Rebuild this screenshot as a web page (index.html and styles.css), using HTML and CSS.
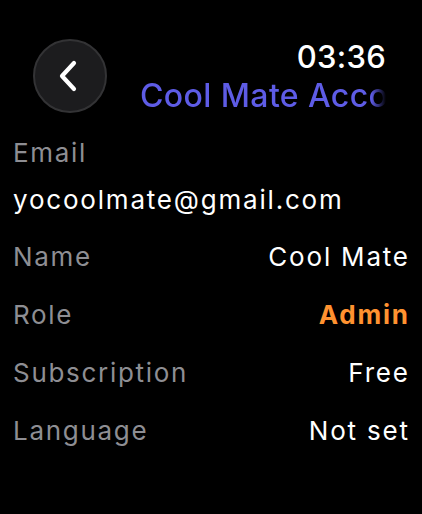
FILE: index.html
```html
<!DOCTYPE html>
<html lang="en">

<head>
    <meta charset="UTF-8" />
    <meta name="viewport" content="width=device-width, initial-scale=1.0" />
    <title>Account</title>
    <link rel="stylesheet" href="styles.css">
</head>

<body>
    <header class="top-bar">
        <button class="btn-back" aria-label="Back">
            <svg width="22" height="32" viewBox="0 0 22 32">
                <path d="M17 3 L5 16 L17 29" fill="none" stroke="#fff" stroke-width="4.2" stroke-linecap="round" stroke-linejoin="round"/>
            </svg>
        </button>
        <div class="top-right">
            <div class="time">03:36</div>
            <div class="title">Cool Mate Account</div>
        </div>
    </header>

    <main class="details">
        <div class="email-block">
            <div class="label">Email</div>
            <div class="value">yocoolmate@gmail.com</div>
        </div>
        <div class="row">
            <span class="label">Name</span>
            <span class="value">Cool Mate</span>
        </div>
        <div class="row">
            <span class="label">Role</span>
            <span class="value admin">Admin</span>
        </div>
        <div class="row">
            <span class="label">Subscription</span>
            <span class="value">Free</span>
        </div>
        <div class="row">
            <span class="label">Language</span>
            <span class="value">Not set</span>
        </div>
    </main>
</body>

</html>
```

FILE: styles.css
```css
* {
    margin: 0;
    padding: 0;
    box-sizing: border-box;
    font-family: Inter, "Noto Sans", sans-serif;
}

body {
    background: #000;
    color: #fff;
    width: 422px;
    height: 514px;
    overflow: hidden;
}

.top-bar {
    display: flex;
    align-items: flex-start;
    padding: 38px 36px 0 33px;
    gap: 33px;
}

.btn-back {
    width: 74px;
    height: 74px;
    margin-top: 1px;
    border-radius: 50%;
    background: #1c1c1e;
    border: 2px solid #333335;
    display: flex;
    align-items: center;
    justify-content: center;
    flex-shrink: 0;
}

.btn-back svg {
    margin-left: -4px;
}

.top-right {
    flex: 1;
    min-width: 0;
    text-align: right;
}

.time {
    font-size: 31px;
    line-height: 38px;
    font-weight: 500;
    letter-spacing: 0.3px;
}

.title {
    font-size: 32px;
    line-height: 40px;
    font-weight: 500;
    letter-spacing: 0.4px;
    color: #5e5ce6;
    white-space: nowrap;
    overflow: hidden;
    text-align: left;
    -webkit-mask-image: linear-gradient(to right, #000 94%, transparent 100%);
    mask-image: linear-gradient(to right, #000 94%, transparent 100%);
}

.details {
    padding: 13px 14px 0 13px;
}

.label {
    color: #8e8e93;
    font-size: 26px;
    letter-spacing: 1.7px;
}

.value {
    font-size: 26px;
    letter-spacing: 1.8px;
}

.row .value {
    margin-right: -1.8px;
}

.email-block div {
    line-height: 47px;
}

.email-block {
    margin-bottom: 5px;
}

.row {
    display: flex;
    justify-content: space-between;
    line-height: 58px;
}

.admin {
    color: #ff9230;
    font-weight: 700;
}
```
